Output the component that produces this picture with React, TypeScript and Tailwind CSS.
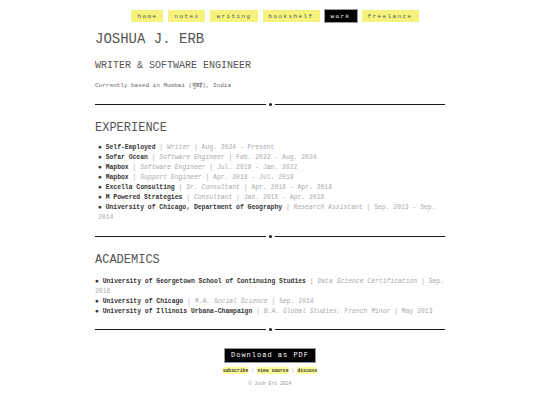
import React from 'react';

const nav = ['home', 'notes', 'writing', 'bookshelf', 'work', 'freelance'];

const jobs = [
  { org: 'Self-Employed', role: 'Writer', dates: 'Aug. 2024 - Present' },
  { org: 'Sofar Ocean', role: 'Software Engineer', dates: 'Feb. 2022 - Aug. 2024' },
  { org: 'Mapbox', role: 'Software Engineer', dates: 'Jul. 2019 - Jan. 2022' },
  { org: 'Mapbox', role: 'Support Engineer', dates: 'Apr. 2018 - Jul. 2019' },
  { org: 'Excella Consulting', role: 'Sr. Consultant', dates: 'Apr. 2016 - Apr. 2018' },
  { org: 'M Powered Strategies', role: 'Consultant', dates: 'Jan. 2015 - Apr. 2016' },
  { org: 'University of Chicago, Department of Geography', role: 'Research Assistant', dates: 'Sep. 2013 - Sep. 2014' },
];

const schools = [
  { org: 'University of Georgetown School of Continuing Studies', role: 'Data Science Certification', dates: 'Sep. 2016' },
  { org: 'University of Chicago', role: 'M.A. Social Science', dates: 'Sep. 2014' },
  { org: 'University of Illinois Urbana-Champaign', role: 'B.A. Global Studies, French Minor', dates: 'May 2013' },
];

function Divider() {
  return (
    <div className="flex items-center gap-[3px]">
      <div className="h-[1.5px] flex-1 bg-[#1a1a1a]" />
      <div className="h-[3px] w-[3px] rounded-full bg-[#1a1a1a]" />
      <div className="h-[1.5px] flex-1 bg-[#1a1a1a]" />
    </div>
  );
}

function Entry({ org, role, dates, indent }: { org: string; role: string; dates: string; indent?: boolean }) {
  return (
    <li className={indent ? 'pl-[3px]' : ''}>
      <span className="font-bold text-[#333]">● {org}</span>
      <span className="text-[#aaa]"> | </span>
      <em className="text-[#aaa]">{role}</em>
      <span className="text-[#aaa]"> | {dates}</span>
    </li>
  );
}

export default function App() {
  return (
    <div className="min-h-[405px] bg-white text-[#555]" style={{ fontFamily: '"Liberation Mono", "Courier New", "Noto Sans", monospace' }}>
      <nav className="flex justify-center gap-[5px] pl-[10px] pt-[10px]">
        {nav.map((n) => (
          <a
            key={n}
            className={
              'flex h-[12px] items-center px-[6px] text-[6px] tracking-[1.4px] ' +
              (n === 'work' ? 'bg-black text-white outline outline-1 outline-[#999]' : 'bg-[#f5f37d] text-[#555]')
            }
          >
            {n}
          </a>
        ))}
      </nav>

      <main className="mx-auto w-[350px]">
        <h1 className="mt-[9px] text-[14px] leading-[16px] text-[#555]">JOSHUA J. ERB</h1>
        <h2 className="mt-[13px] text-[10px] leading-[12px] text-[#555]">WRITER &amp; SOFTWARE ENGINEER</h2>
        <p className="mt-[9px] text-[6px] leading-[10px] text-[#666]">Currently based in Mumbai (मुंबई), India</p>

        <div className="mt-[12px]">
          <Divider />
        </div>

        <h3 className="mt-[15px] text-[12px] leading-[14px] text-[#555]">EXPERIENCE</h3>
        <ul className="mt-[8px] text-[6.4px] leading-[10px]">
          {jobs.map((j, i) => (
            <Entry key={i} {...j} indent />
          ))}
        </ul>

        <div className="mt-[12px]">
          <Divider />
        </div>

        <h3 className="mt-[15px] text-[12px] leading-[14px] text-[#555]">ACADEMICS</h3>
        <ul className="mt-[10px] text-[6.4px] leading-[10px]">
          {schools.map((s, i) => (
            <Entry key={i} {...s} />
          ))}
        </ul>

        <div className="mt-[11px]">
          <Divider />
        </div>

        <div className="mt-[18px] flex justify-center">
          <button className="h-[13px] bg-black px-[6px] text-[7px] leading-[13px] tracking-[1px] text-white outline outline-1 outline-[#999]">
            Download as PDF
          </button>
        </div>

        <div className="mt-[5px] flex justify-center gap-[3px] text-[4.75px] leading-[7px]">
          <a className="bg-[#ffff99] font-bold text-[#333]">subscribe</a>
          <span className="text-[#aaa]">|</span>
          <a className="bg-[#ffff99] font-bold text-[#333]">view source</a>
          <span className="text-[#aaa]">|</span>
          <a className="bg-[#ffff99] font-bold text-[#333]">discuss</a>
        </div>

        <p className="mt-[6px] text-center text-[4.75px] leading-[7px] text-[#999]">© Josh Erb 2024</p>
      </main>
    </div>
  );
}
